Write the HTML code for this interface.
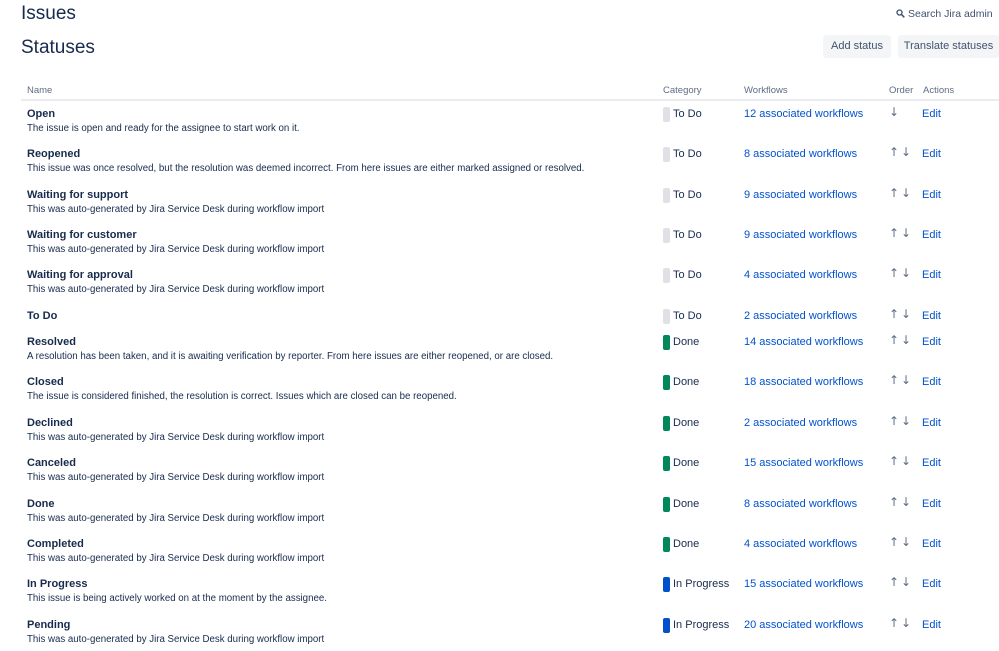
<!DOCTYPE html>
<html><head><meta charset="utf-8"><style>
body{margin:0;width:999px;height:651px;overflow:hidden;background:#fff;font-family:"Liberation Sans",sans-serif;color:#172b4d;position:relative}
.a{position:absolute;white-space:nowrap}
h1{position:absolute;margin:0;font-weight:normal;left:21px}
.th{font-size:9.5px;color:#5e6c84;top:85px}
.n{font-size:11px;font-weight:bold;left:27px;color:#172b4d}
.d{font-size:9.7px;left:27px;color:#172b4d}
.c{font-size:11px;left:673px;color:#172b4d}
.bar{position:absolute;left:663px;width:7px;height:15px;border-radius:2px}
.w{font-size:11px;left:744px;color:#0052cc}
.e{font-size:11px;left:922px;color:#0052cc}
.o{font-size:12px;color:#5e6c84;font-family:"DejaVu Sans",sans-serif}
.btn{position:absolute;top:35px;height:23px;background:#f4f5f7;border-radius:3px;font-size:11px;color:#42526e;line-height:23px;text-align:center}
</style></head><body>
<h1 style="top:3px;font-size:19px">Issues</h1>
<h1 style="top:37px;font-size:19px">Statuses</h1>
<svg class="a" style="left:896px;top:9px" width="9" height="9" viewBox="0 0 9 9"><circle cx="3.5" cy="3.5" r="2.5" fill="none" stroke="#42526e" stroke-width="1.3"/><path d="M5.3 5.3L8.3 8.3" stroke="#42526e" stroke-width="1.5"/></svg>
<div class="a" style="left:908px;top:8px;font-size:10.5px;color:#42526e">Search Jira admin</div>
<div class="btn" style="left:823px;width:68px">Add status</div>
<div class="btn" style="left:898px;width:101px">Translate statuses</div>
<div class="a th" style="left:27px">Name</div>
<div class="a th" style="left:663px">Category</div>
<div class="a th" style="left:744px">Workflows</div>
<div class="a th" style="left:889px">Order</div>
<div class="a th" style="left:923px">Actions</div>
<div class="a" style="left:21px;top:99px;width:978px;height:2px;background:#ebecf0"></div>
<div id="rows"></div>
<script>
var R=[
[113,"Open","The issue is open and ready for the assignee to start work on it.","To Do",12,0],
[153,"Reopened","This issue was once resolved, but the resolution was deemed incorrect. From here issues are either marked assigned or resolved.","To Do",8,1],
[194,"Waiting for support","This was auto-generated by Jira Service Desk during workflow import","To Do",9,1],
[234,"Waiting for customer","This was auto-generated by Jira Service Desk during workflow import","To Do",9,1],
[274,"Waiting for approval","This was auto-generated by Jira Service Desk during workflow import","To Do",4,1],
[315,"To Do","","To Do",2,1],
[341,"Resolved","A resolution has been taken, and it is awaiting verification by reporter. From here issues are either reopened, or are closed.","Done",14,1],
[381,"Closed","The issue is considered finished, the resolution is correct. Issues which are closed can be reopened.","Done",18,1],
[422,"Declined","This was auto-generated by Jira Service Desk during workflow import","Done",2,1],
[462,"Canceled","This was auto-generated by Jira Service Desk during workflow import","Done",15,1],
[503,"Done","This was auto-generated by Jira Service Desk during workflow import","Done",8,1],
[543,"Completed","This was auto-generated by Jira Service Desk during workflow import","Done",4,1],
[583,"In Progress","This issue is being actively worked on at the moment by the assignee.","In Progress",15,1],
[624,"Pending","This was auto-generated by Jira Service Desk during workflow import","In Progress",20,1]];
var col={"To Do":"#dfe1e6","Done":"#00875a","In Progress":"#0052cc"};
var h="";
R.forEach(function(r){var t=r[0]-5;
h+='<div class="a n" style="top:'+t+'px">'+r[1]+'</div>';
if(r[2])h+='<div class="a d" style="top:'+(t+15)+'px">'+r[2]+'</div>';
h+='<div class="bar" style="top:'+(t-1)+'px;background:'+col[r[3]]+'"></div>';
h+='<div class="a c" style="top:'+t+'px">'+r[3]+'</div>';
h+='<div class="a w" style="top:'+t+'px">'+r[4]+' associated workflows</div>';
h+='<div class="a e" style="top:'+t+'px">Edit</div>';
if(r[5])h+='<div class="a o" style="top:'+(t-3)+'px;left:889px">&#8593;</div>';
h+='<div class="a o" style="top:'+(t-3)+'px;left:'+(r[5]?901:889)+'px">&#8595;</div>';
});
document.getElementById("rows").innerHTML=h;
</script>
</body></html>
